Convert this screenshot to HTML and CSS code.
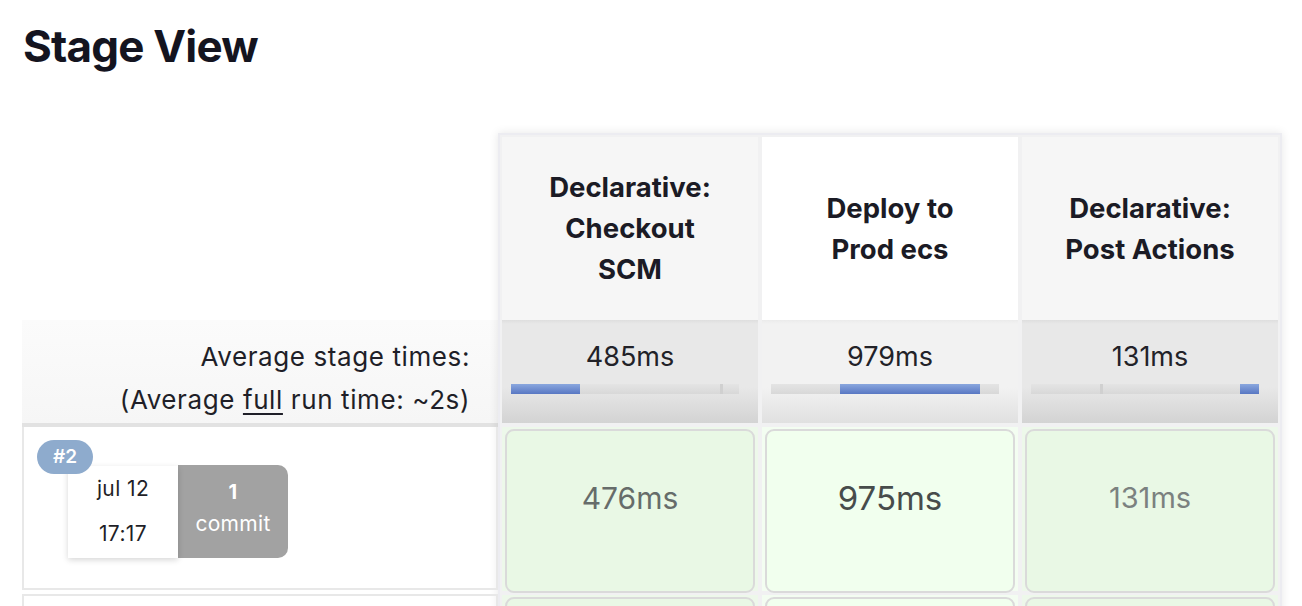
FILE: index.html
```html
<!DOCTYPE html>
<html lang="en">
<head>
<meta charset="utf-8">
<title>Stage View</title>
<link rel="stylesheet" href="styles.css">
</head>
<body>
<h1 class="title">Stage View</h1>
<div class="stage-view">
  <div class="labels">
    <div class="label-head"></div>
    <div class="label-avg">
      <div>Average stage times:</div>
      <div>(Average <span class="u">full</span> run time: ~2s)</div>
    </div>
    <div class="run-row">
      <span class="badge">#2</span>
      <div class="run-info">
        <div class="date">
          <div class="date-line">jul 12</div>
          <div class="date-line">17:17</div>
        </div>
        <div class="commit">
          <div class="commit-num">1</div>
          <div class="commit-txt">commit</div>
        </div>
      </div>
    </div>
    <div class="run-row next"></div>
  </div>
  <div class="stages">
    <div class="head alt">Declarative: Checkout SCM</div>
    <div class="head">Deploy to Prod ecs</div>
    <div class="head alt">Declarative: Post Actions</div>

    <div class="avg alt">
      <div class="avg-time">485ms</div>
      <div class="bar"><span class="fill" style="margin-left:0;width:69px"></span><span class="tick" style="left:209px"></span></div>
    </div>
    <div class="avg light">
      <div class="avg-time">979ms</div>
      <div class="bar"><span class="fill" style="margin-left:69px;width:140px"></span></div>
    </div>
    <div class="avg alt">
      <div class="avg-time">131ms</div>
      <div class="bar"><span class="fill" style="margin-left:209px;width:19px"></span><span class="tick" style="left:69px"></span></div>
    </div>

    <div class="body-col"><div class="cell c1">476ms</div></div>
    <div class="body-col hi"><div class="cell c2">975ms</div></div>
    <div class="body-col"><div class="cell c3">131ms</div></div>

    <div class="body-col"><div class="cell c1"></div></div>
    <div class="body-col hi"><div class="cell c2"></div></div>
    <div class="body-col"><div class="cell c3"></div></div>
  </div>
</div>
</body>
</html>
```

FILE: styles.css
```css
html, body {
  margin: 0;
  padding: 0;
  background: #ffffff;
  overflow: hidden;
}
body {
  font-family: Inter, "Noto Sans", "Liberation Sans", sans-serif;
  color: #1b1b25;
  padding-top: 19px;
  height: 587px;
}
.title {
  margin: 0 0 0 23px;
  font-size: 44px;
  line-height: 54px;
  font-weight: 700;
  letter-spacing: -0.8px;
  color: #14141f;
}
.stage-view {
  display: flex;
  align-items: flex-start;
  margin-top: 60px;
  margin-left: 22px;
}
.labels {
  width: 476px;
  flex: none;
}
.label-head {
  height: 187px;
}
.label-avg {
  height: 107px;
  box-sizing: border-box;
  padding: 15px 28px 0 0;
  text-align: right;
  font-size: 26px;
  line-height: 43px;
  letter-spacing: 0.6px;
  color: #1f1f28;
  background: linear-gradient(#fbfbfb, #f6f6f6);
  border-bottom: 4px solid #e2e2e2;
}
.u {
  text-decoration: underline;
  text-underline-offset: 4px;
  text-decoration-thickness: 2px;
}
.run-row {
  position: relative;
  height: 163px;
  box-sizing: border-box;
  border: 2px solid #e8e8e8;
  border-top: none;
  padding: 39px 0 0 44px;
}
.run-row.next {
  margin-top: 4px;
  border-top: 2px solid #e8e8e8;
  border-bottom: none;
}
.badge {
  position: absolute;
  left: 13px;
  top: 13px;
  width: 56px;
  height: 34px;
  border-radius: 17px;
  background: #8eabcd;
  color: #ffffff;
  font-size: 19px;
  font-weight: 600;
  line-height: 34px;
  text-align: center;
  z-index: 2;
}
.run-info {
  display: flex;
}
.date {
  width: 110px;
  height: 92px;
  box-sizing: border-box;
  background: #ffffff;
  box-shadow: 0 2px 6px rgba(0, 0, 0, 0.16);
  text-align: center;
  font-size: 21px;
  letter-spacing: 0.4px;
  color: #1f1f28;
  padding-top: 6px;
  position: relative;
  z-index: 1;
}
.date-line {
  height: 45px;
  line-height: 34px;
}
.commit {
  width: 110px;
  height: 93px;
  margin-top: -1px;
  box-sizing: border-box;
  background: #a2a2a2;
  border-radius: 0 10px 10px 0;
  color: #ffffff;
  text-align: center;
  font-size: 21px;
  letter-spacing: 0.3px;
  padding-top: 12px;
}
.commit-num {
  font-weight: 700;
  line-height: 30px;
  font-size: 20px;
}
.commit-txt {
  line-height: 34px;
}
.stages {
  flex: none;
  display: grid;
  grid-template-columns: 256px 256px 256px;
  grid-template-rows: 183px 103px 168px 168px;
  column-gap: 4px;
  padding: 2px;
  border: 2px solid #ececf1;
  background: #f1f1f2;
  box-shadow: 0 0 9px rgba(0, 0, 0, 0.10);
  margin-top: 0;
}
.head {
  display: flex;
  align-items: center;
  justify-content: center;
  text-align: center;
  padding: 0 34px;
  background: #ffffff;
  font-size: 27.5px;
  line-height: 41px;
  font-weight: 700;
  color: #1b1b25;
}
.head.alt {
  background: #f6f6f6;
}
.avg {
  box-sizing: border-box;
  padding-top: 19px;
  background: linear-gradient(#dedede 0, #e8e8e8 4px, #e8e8e8 65%, #d3d3d3 100%);
  text-align: center;
}
.avg.light {
  background: linear-gradient(#ebebeb 0, #f2f2f2 4px, #f2f2f2 65%, #e0e0e0 100%);
}
.avg-time {
  font-size: 27px;
  line-height: 36px;
  color: #222228;
}
.bar {
  position: relative;
  display: flex;
  width: 228px;
  height: 10px;
  margin: 9px 0 0 9px;
  background: linear-gradient(#e4e4e4, #d8d8d8);
}
.fill {
  display: block;
  height: 10px;
  background: linear-gradient(#8aa7de, #5877c3);
}
.tick {
  position: absolute;
  top: 0;
  width: 3px;
  height: 10px;
  background: #d0d0d0;
}
.body-col {
  margin-top: 4px;
  padding: 2px 3px 3px;
  background: #edf8ea;
  box-sizing: border-box;
}
.body-col.hi {
  background: #f3fdf1;
}
.cell {
  height: 164px;
  box-sizing: border-box;
  border: 2px solid #dadada;
  border-radius: 9px;
  background: #e9f8e5;
  text-align: center;
  padding-top: 47px;
  line-height: 40px;
}
.cell.c1 {
  font-size: 30px;
  color: #666c6a;
}
.cell.c2 {
  background: #f1ffee;
  font-size: 33px;
  color: #474c4b;
}
.cell.c3 {
  font-size: 29px;
  color: #7b817f;
}
```
